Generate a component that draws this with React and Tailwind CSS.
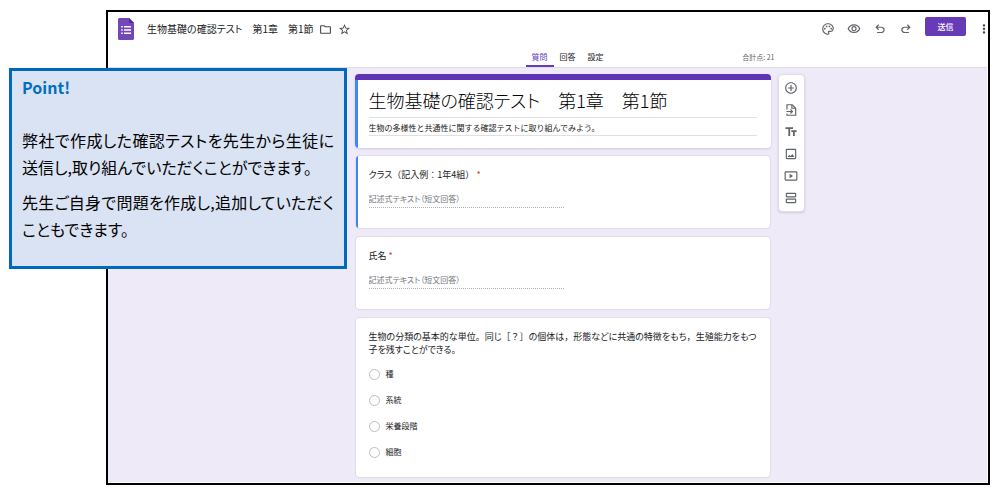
import {
	MdMoreVert,
	MdOutlineAddCircleOutline,
	MdOutlineFolder,
	MdOutlineImage,
	MdOutlinePalette,
	MdOutlineVisibility,
	MdStarBorder,
	MdTextFields,
	MdOutlineViewAgenda,
} from "react-icons/md";

function FormsLogo() {
	return (
		<svg viewBox="0 0 16 22" className="w-4 h-[22px] shrink-0" aria-hidden="true">
			<path d="M1.5 0H11l5 5v15.5a1.5 1.5 0 0 1-1.5 1.5h-13A1.5 1.5 0 0 1 0 20.5v-19A1.5 1.5 0 0 1 1.5 0z" fill="#7248b9" />
			<path d="M11 0l5 5h-3.5A1.5 1.5 0 0 1 11 3.5z" fill="#4c2a91" />
			<path d="M6 8h7v1.5H6zM6 11.2h7v1.5H6zM6 14.4h7v1.5H6z" fill="#fff" />
			<path d="M3.2 8h1.6v1.6H3.2zM3.2 11.2h1.6v1.6H3.2zM3.2 14.4h1.6v1.6H3.2z" fill="#fff" />
		</svg>
	);
}

function UndoIcon() {
	return (
		<svg viewBox="0 -960 960 960" className="w-[14px] h-[14px]" fill="currentColor">
			<path d="M280-200v-80h284q63 0 109.5-40T720-420q0-60-46.5-100T564-560H312l104 104-56 56-200-200 200-200 56 56-104 104h252q97 0 169.5 63T800-420q0 94-72.5 157T564-200H280Z" />
		</svg>
	);
}

function RedoIcon() {
	return (
		<svg viewBox="0 -960 960 960" className="w-[14px] h-[14px]" fill="currentColor">
			<path d="M396-200q-97 0-169.5-63T154-420q0-94 72.5-157T396-640h252L544-744l56-56 200 200-200 200-56-56 104-104H396q-63 0-109.5 40T240-420q0 60 46.5 100T396-280h284v80H396Z" />
		</svg>
	);
}

function ImportIcon() {
	return (
		<svg viewBox="0 0 24 24" className="w-[14px] h-[14px]" fill="none" stroke="currentColor" strokeWidth="2">
			<path d="M5 11V3h9l6 6v12H5v-3" />
			<path d="M13.5 3v6H20" />
			<path d="M4 14.5h10M11 11l3.5 3.5L11 18" />
		</svg>
	);
}

function VideoIcon() {
	return (
		<svg viewBox="0 0 24 24" className="w-[14px] h-[14px]" fill="none" stroke="currentColor" strokeWidth="2">
			<rect x="2" y="5" width="20" height="14" rx="1" />
			<path d="M9.5 8v8l6-4z" fill="currentColor" stroke="none" />
		</svg>
	);
}

// Proportional kana, full-width punctuation
function Phrase({ text }) {
	return text.split(/([，。：（）［？］]+)/).map((part, i) => (
		<span key={i} className={i % 2 ? "" : "[font-feature-settings:'palt']"}>{part}</span>
	));
}

const actions = [
	{ label: "テーマをカスタマイズ", icon: <MdOutlinePalette size={14} /> },
	{ label: "プレビュー", icon: <MdOutlineVisibility size={14} /> },
	{ label: "元に戻す", icon: <UndoIcon /> },
	{ label: "やり直す", icon: <RedoIcon /> },
];

const tools = [
	{ label: "質問を追加", icon: <MdOutlineAddCircleOutline size={14} /> },
	{ label: "質問をインポート", icon: <ImportIcon /> },
	{ label: "タイトルと説明を追加", icon: <MdTextFields size={14} /> },
	{ label: "画像を追加", icon: <MdOutlineImage size={14} /> },
	{ label: "動画を追加", icon: <VideoIcon /> },
	{ label: "セクションを追加", icon: <MdOutlineViewAgenda size={14} /> },
];

const choices = ["種", "系統", "栄養段階", "細胞"];

function Header() {
	return (
		<header className="bg-white border-b border-[#dfdce8]">
			<div className="flex items-center h-[34px] pl-[10px]">
				<FormsLogo />
				<h1 className="ml-[13px] text-[10px] leading-4 text-[#202124] whitespace-nowrap [font-feature-settings:'palt']">生物基礎の確認テスト　第1章　第1節</h1>
				<button aria-label="フォルダに移動" className="ml-[5px] text-[#444746]"><MdOutlineFolder size={13} /></button>
				<button aria-label="スターを付ける" className="ml-[6px] text-[#444746]"><MdStarBorder size={13} /></button>
				<div className="ml-auto flex items-center text-[#5f6368]">
					{actions.map((a) => (
						<button key={a.label} aria-label={a.label} className="w-[26px] h-6 flex items-center justify-center">
							{a.icon}
						</button>
					))}
				</div>
				<button className="ml-[6px] w-[41px] h-[19px] mb-[5px] rounded-xs bg-[#673ab7] text-white text-[8px] leading-none font-medium">送信</button>
				<button aria-label="その他" className="ml-[14px] w-[7px] overflow-hidden flex justify-center text-[#444746] shrink-0">
					<MdMoreVert size={14} className="shrink-0" />
				</button>
			</div>
			<div className="flex justify-center pl-[63px]">
				<div className="w-[449px] pl-[6px] pr-[29px] grid grid-cols-[1fr_auto_1fr] items-end">
					<nav className="col-start-2 flex text-[8px] leading-4 text-[#202124]">
						<a href="#questions" className="px-[6px] pt-[3px] border-b-2 border-[#673ab7] text-[#673ab7]">質問</a>
						<a href="#answers" className="px-[6px] pt-[3px]">回答</a>
						<a href="#settings" className="px-[6px] pt-[3px]">設定</a>
					</nav>
					<span className="text-right text-[7px] leading-4 pb-[2px] text-[#5f6368]">合計点: 21</span>
				</div>
			</div>
		</header>
	);
}

function ShortAnswerCard({ id, label, selected = false }) {
	return (
		<section className="relative overflow-hidden h-[74px] rounded-sm bg-white border border-[#dfdbe8] pl-[13px] pt-3">
			{selected && <div className="absolute -left-px -top-px -bottom-px w-[3px] bg-[#4285f4]" />}
			<label htmlFor={id} className="block text-[9px] leading-[14px] text-[#202124]">
				<Phrase text={label} /> <span className="text-[#d93025]">*</span>
			</label>
			<input
				id={id}
				type="text"
				placeholder="記述式テキスト（短文回答）"
				className="block mt-[9px] w-[195px] h-[17px] pb-px border-b border-dotted border-[#b0b0b0] text-[8px] leading-4 placeholder:text-[#70757a] [font-feature-settings:'palt']"
			/>
		</section>
	);
}

function Toolbar() {
	return (
		<aside className="w-[27px] self-start rounded-sm bg-white border border-[#e0dce8] shadow-sm flex flex-col py-[2px] text-[#5f6368]">
			{tools.map((t) => (
				<button key={t.label} aria-label={t.label} className="h-[22px] flex items-center justify-center">
					{t.icon}
				</button>
			))}
		</aside>
	);
}

function Callout() {
	return (
		<aside className="absolute left-[9px] top-[68px] w-[338px] h-[201px] border-3 border-[#0069bd] bg-[#dae3f3] px-[10px] pt-[5px] text-[16px] leading-[27px] text-black [font-feature-settings:'palt']">
			<h2 className="text-[16px] leading-[22px] font-bold text-[#0070c0]">Point!</h2>
			<p className="mt-[29px] text-justify">弊社で作成した確認テストを先生から生徒に送信し,取り組んでいただくことができます。</p>
			<p className="mt-2 text-justify">先生ご自身で問題を作成し,追加していただくこともできます。</p>
		</aside>
	);
}

export default function App() {
	return (
		<div lang="ja" className="relative bg-white pl-[106px] pr-[10px] py-[10px] font-['Noto_Sans_CJK_JP',sans-serif]">
			<div className="border-2 border-black pr-px pb-px">
				<Header />
				<main className="flex justify-center gap-[7px] pl-16 pt-[6px] pb-1 bg-[#eeeaf7]">
					<div className="w-[416px] flex flex-col gap-[7px]">
						<section className="relative overflow-hidden h-[74px] rounded-sm bg-white border-t-6 border-[#5f33b5] shadow-sm px-[14px] pt-[6px]">
							<div className="absolute left-0 inset-y-0 w-[3px] bg-[#4285f4]" />
							<input
								type="text"
								aria-label="フォームのタイトル"
								defaultValue="生物基礎の確認テスト　第1章　第1節"
								className="block w-full h-8 pb-[3px] border-b border-[#e0e0e0] text-[18px] leading-7 font-light text-black [font-feature-settings:'palt']"
							/>
							<input
								type="text"
								aria-label="フォームの説明"
								defaultValue="生物の多様性と共通性に関する確認テストに取り組んでみよう。"
								className="block w-full h-[18px] pt-px border-b border-[#e0e0e0] text-[8px] leading-4 text-[#202124]"
							/>
						</section>
						<ShortAnswerCard id="class" label="クラス（記入例：1年4組）" selected />
						<ShortAnswerCard id="name" label="氏名" />
						<section className="rounded-sm bg-white border border-[#dfdbe8] px-[13px] pt-3 pb-3">
							<fieldset>
								<legend className="text-[9px] leading-[13px] text-[#202124] whitespace-nowrap">
									<Phrase text="生物の分類の基本的な単位。同じ［？］の個体は，形態などに共通の特徴をもち，生殖能力をもつ" />
									<br />
									<Phrase text="子を残すことができる。" />
								</legend>
								<div className="pt-[5px]">
									{choices.map((c) => (
										<label key={c} className="flex items-center gap-[6px] h-[26px] text-[8px] leading-4 text-[#202124]">
											<input type="radio" name="unit" className="appearance-none w-[11px] h-[11px] rounded-full border border-[#bdbdbd] bg-white" />
											{c}
										</label>
									))}
								</div>
							</fieldset>
						</section>
					</div>
					<Toolbar />
				</main>
			</div>
			<Callout />
		</div>
	);
}
